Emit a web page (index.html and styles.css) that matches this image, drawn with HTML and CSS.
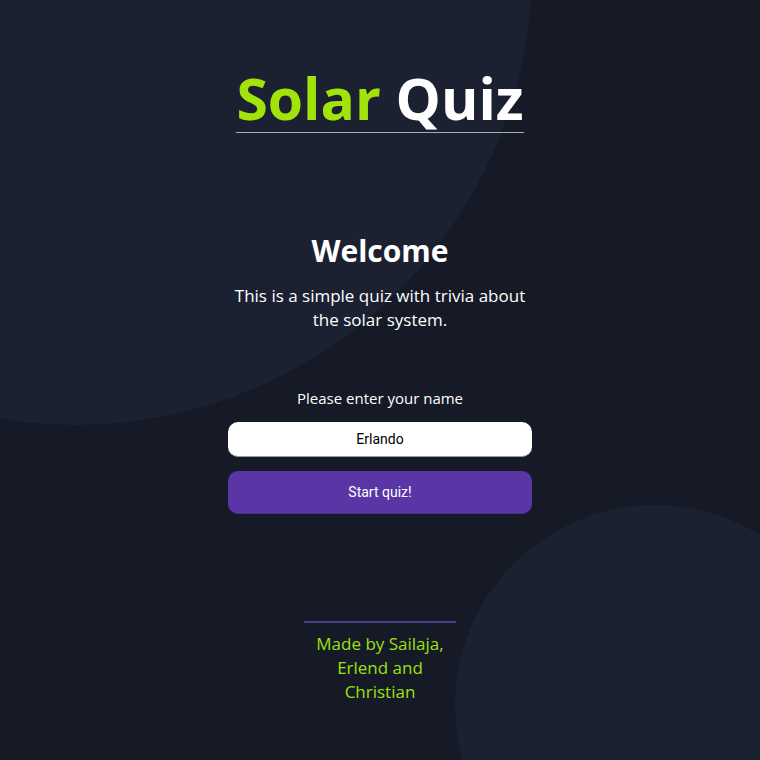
FILE: index.html
```html
<!DOCTYPE html>
<html lang="en">
<head>
<meta charset="utf-8">
<title>Solar Quiz</title>
<link rel="stylesheet" href="styles.css">
</head>
<body>
<div class="scene">
  <div class="planet planet-big"></div>
  <div class="planet planet-small"></div>
  <main class="page">
    <header class="header">
      <h1 class="title"><span class="title-solar">Solar</span> Quiz</h1>
    </header>
    <section class="welcome">
      <h2 class="welcome-title">Welcome</h2>
      <p class="welcome-text">This is a simple quiz with trivia about the solar system.</p>
    </section>
    <form class="name-form">
      <label class="name-label" for="name">Please enter your name</label>
      <input class="name-input" id="name" type="text" value="Erlando">
      <button class="start-btn" type="button">Start quiz!</button>
    </form>
    <footer class="footer">
      <p class="footer-text">Made by Sailaja, Erlend and Christian</p>
    </footer>
  </main>
</div>
</body>
</html>
```

FILE: styles.css
```css
html, body {
  margin: 0;
  padding: 0;
}
body {
  background: #151a26;
  font-family: "Open Sans", "Noto Sans", sans-serif;
  color: #ffffff;
}
.scene {
  position: relative;
  height: 760px;
  overflow: hidden;
}
.planet {
  position: absolute;
  border-radius: 50%;
  background: #1c2132;
  z-index: 0;
}
.planet-big {
  left: -382px;
  top: -489px;
  width: 914px;
  height: 914px;
}
.planet-small {
  left: 455px;
  top: 505px;
  width: 400px;
  height: 400px;
}
.page {
  position: relative;
  z-index: 1;
  width: 304px;
  margin: 0 auto;
  display: flex;
  flex-direction: column;
  align-items: center;
  text-align: center;
}
.header {
  padding-top: 64px;
}
.title {
  display: inline-block;
  margin: 0;
  font-size: 57px;
  font-weight: 700;
  line-height: 68px;
  border-bottom: 1px solid #a9adb5;
  color: #ffffff;
}
.title-solar {
  color: #a2e30c;
}
.welcome {
  margin-top: 98px;
}
.welcome-title {
  margin: 0;
  font-size: 30px;
  font-weight: 700;
  line-height: 40px;
}
.welcome-text {
  margin: 13px 0 0;
  font-size: 17px;
  line-height: 24px;
}
.name-form {
  margin-top: 55px;
  width: 304px;
  display: flex;
  flex-direction: column;
  align-items: stretch;
}
.name-label {
  font-size: 15px;
  line-height: 22px;
}
.name-input {
  margin-top: 13px;
  height: 35px;
  box-sizing: border-box;
  border: none;
  border-bottom: 1px solid #9a9ca3;
  border-radius: 10px;
  background: #ffffff;
  font-family: Roboto, "Liberation Sans", sans-serif;
  font-size: 14px;
  color: #000000;
  text-align: center;
  padding: 0 10px;
}
.start-btn {
  margin-top: 14px;
  height: 43px;
  border: none;
  border-bottom: 1px solid #46308a;
  border-radius: 10px;
  background: #5935a6;
  color: #ffffff;
  font-family: Roboto, "Liberation Sans", sans-serif;
  font-size: 14px;
}
.footer {
  margin-top: 107px;
  width: 152px;
  border-top: 2px solid #4a3f86;
}
.footer-text {
  margin: 9px 0 0;
  color: #9be10e;
  font-size: 17px;
  line-height: 24px;
}
```
